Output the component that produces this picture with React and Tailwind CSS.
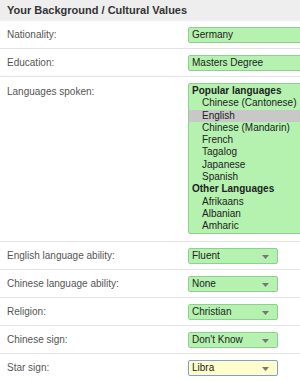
const textRows = [
  { label: 'Nationality:', value: 'Germany' },
  { label: 'Education:', value: 'Masters Degree' },
];

const selectRows = [
  { label: 'English language ability:', value: 'Fluent' },
  { label: 'Chinese language ability:', value: 'None' },
  { label: 'Religion:', value: 'Christian' },
  { label: 'Chinese sign:', value: "Don't Know" },
  { label: 'Star sign:', value: 'Libra', focus: true },
];

const languages = [
  { group: 'Popular languages', items: ['Chinese (Cantonese)', 'English', 'Chinese (Mandarin)', 'French', 'Tagalog', 'Japanese', 'Spanish'] },
  { group: 'Other Languages', items: ['Afrikaans', 'Albanian', 'Amharic'] },
];

const Label = ({ children }) => (
  <div className="w-[188px] shrink-0 pl-[7px] text-[10px] leading-[16px] text-[#555]">{children}</div>
);

const Arrow = () => (
  <svg width="7" height="4" viewBox="0 0 7 4" className="absolute right-[8px] top-[6px]">
    <path d="M0 0h7L3.5 4z" fill="#777" />
  </svg>
);

export default function App() {
  return (
    <div className="w-[300px] h-[381px] overflow-hidden bg-white" style={{ fontFamily: '"Liberation Sans", Arial, sans-serif' }}>
      <div className="h-[21px] bg-[#eeeeee] pl-[7px] text-[11px] font-bold leading-[21px] text-[#333]">
        Your Background / Cultural Values
      </div>

      {textRows.map(r => (
        <div key={r.label} className="flex h-[28px] items-center border-b border-[#e2e2e2] pt-[1px]">
          <Label>{r.label}</Label>
          <div className="h-[16px] w-[130px] shrink-0 rounded-[2px] border border-[#8fcf8f] bg-[#b5f2b0] pl-[3px] text-[10px] leading-[14px] text-[#222]">
            {r.value}
          </div>
        </div>
      ))}

      <div className="flex h-[165px] border-b border-[#e2e2e2] pt-[6px]">
        <div className="pt-[1px]"><Label>Languages spoken:</Label></div>
        <div className="h-[151px] w-[130px] shrink-0 rounded-[2px] border border-[#8fcf8f] bg-[#b5f2b0] pt-[1px] text-[10px] leading-[12.3px] text-[#222]">
          {languages.map(g => (
            <div key={g.group}>
              <div className="pl-[3px] font-bold">{g.group}</div>
              {g.items.map(i => (
                <div key={i} className={`pl-[13px] ${i === 'English' ? 'bg-[#c8c8c8]' : ''}`}>{i}</div>
              ))}
            </div>
          ))}
        </div>
      </div>

      {selectRows.map(r => (
        <div key={r.label} className="flex h-[28px] items-center border-b border-[#e2e2e2] pt-[1px]">
          <Label>{r.label}</Label>
          <div className={`relative h-[16px] w-[90px] shrink-0 rounded-[2px] border pl-[3px] text-[10px] leading-[14px] text-[#222] ${r.focus ? 'border-[#7f9fd4] bg-[#ffffcc]' : 'border-[#8fcf8f] bg-[#b5f2b0]'}`}>
            {r.value}
            <Arrow />
          </div>
        </div>
      ))}
    </div>
  );
}
